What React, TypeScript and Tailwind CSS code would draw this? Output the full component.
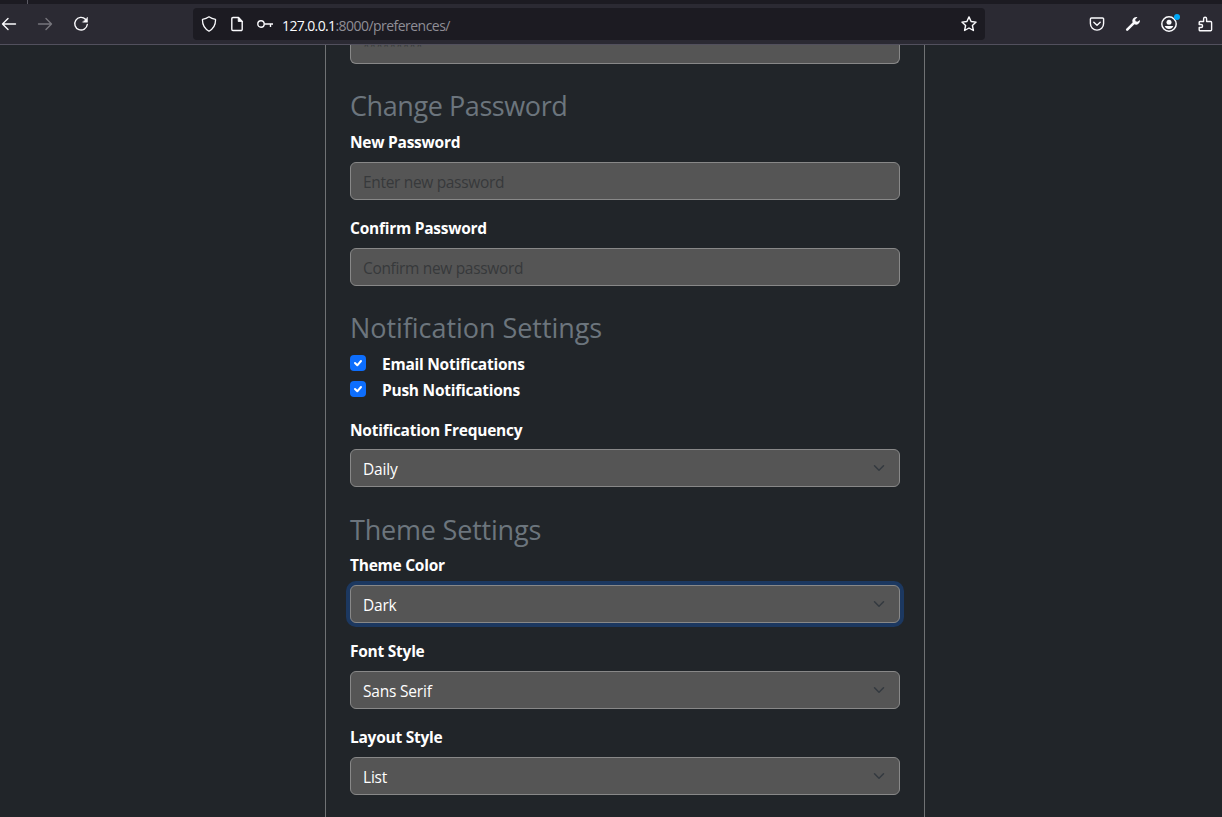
import type { ReactNode } from "react";

const FONT = "font-['Open_Sans','Noto_Sans',sans-serif]";

function Heading({ children, className }: { children: ReactNode; className: string }) {
  return (
    <h3 className={`flex h-[34px] items-center whitespace-nowrap text-[27px] leading-[34px] font-normal text-[#6c757d] ${className}`}>
      <span>{children}</span>
    </h3>
  );
}

function Label({ children, className = "" }: { children: ReactNode; className?: string }) {
  return (
    <label className={`block h-6 whitespace-nowrap text-[15.5px] leading-6 font-bold tracking-[-0.25px] text-white ${className}`}>
      <span>{children}</span>
    </label>
  );
}

const BOX = "flex h-[38px] w-full shrink-0 items-center rounded-md border border-[#888] bg-[#555] px-3 text-[15.5px] leading-6 whitespace-nowrap";

function Input({ placeholder, className = "" }: { placeholder: string; className?: string }) {
  return (
    <div className={`${BOX} tracking-[-0.33px] text-[#37393b] ${className}`}>
      <span className="pt-px">{placeholder}</span>
    </div>
  );
}

function Select({ value, focused = false, className = "" }: { value: string; focused?: boolean; className?: string }) {
  return (
    <div className={`${BOX} justify-between tracking-[-0.2px] text-white ${focused ? "ring-4 ring-[#1c3860]" : ""} ${className}`}>
      <span className="pt-px">{value}</span>
      <svg width="16" height="12" viewBox="0 0 16 16" fill="none">
        <path d="m2 5 6 6 6-6" stroke="#343a40" strokeWidth="2" strokeLinecap="round" strokeLinejoin="round" />
      </svg>
    </div>
  );
}

function Check({ label }: { label: string }) {
  return (
    <div className="flex h-[26px] items-start">
      <svg width="16" height="16" viewBox="0 0 16 16" className="mr-4 shrink-0">
        <rect width="16" height="16" rx="4" fill="#0d6efd" />
        <path d="m5 8 2.3 2.3L11 6" fill="none" stroke="#fff" strokeWidth="2" strokeLinecap="round" strokeLinejoin="round" />
      </svg>
      <Label className="-mt-[3px]">{label}</Label>
    </div>
  );
}

const ICON = { width: 16, height: 16, viewBox: "0 0 16 16", fill: "none", stroke: "#fbfbfe", strokeWidth: 1.4, strokeLinecap: "round", strokeLinejoin: "round" } as const;

function Toolbar() {
  return (
    <header className="shrink-0 bg-[#2b2a33]">
      <div className="flex h-1 bg-[#1c1b22]">
        <div className="ml-[27px] w-px bg-[#5b5a64]" />
      </div>
      <div className="flex h-[41px] items-center border-b border-[#52505d]">
        <svg {...ICON} className="ml-[1px]"><path d="M14.5 8H1.5M7 2.5 1.5 8 7 13.5" /></svg>
        <svg {...ICON} stroke="#77767d" className="ml-5"><path d="M1.5 8h13M9 2.5 14.5 8 9 13.5" /></svg>
        <svg {...ICON} className="ml-5"><path d="M14.3 8.5A6.3 6.3 0 1 1 12.5 3.2" /><path d="M14.5 1.5v4.7H9.8z" fill="#fbfbfe" strokeWidth=".5" /></svg>
        <div className="ml-[104px] flex h-8 w-[792px] items-center rounded bg-[#1c1b22] px-2">
          <svg {...ICON} strokeWidth={1.3}><path d="M8 .8C6.400 2 4 3 1.500 3.300c-.3 5.200 2 9.300 6.500 11.900 4.500-2.600 6.800-6.700 6.500-11.900C12 3 9.600 2 8 .8Z" /></svg>
          <svg {...ICON} className="ml-3"><path d="M9.500 1.500H4a1.200 1.200 0 0 0-1.200 1.200v10.600A1.200 1.200 0 0 0 4 14.500h8a1.200 1.200 0 0 0 1.200-1.200V5.500z" /><path d="M9.200 1.500v4h4z" fill="#fbfbfe" strokeWidth=".8" /></svg>
          <svg {...ICON} className="ml-3" strokeLinecap="butt"><circle cx="4" cy="8" r="3.200" /><path d="M7.200 8H16M13.500 8v3" /></svg>
          <span className="ml-[9px] whitespace-nowrap pt-[2px] text-[14px] tracking-[-0.54px] text-[#8f8e96]"><span className="tracking-[-0.62px] text-[#fbfbfe]">127.0.0.1</span>:8000/preferences/</span>
          <svg {...ICON} className="ml-auto"><path d="m8 .9 2.100 4.600 5 .6-3.700 3.400 1 5L8 12l-4.400 2.500 1-5L.9 6.100l5-.6z" /></svg>
        </div>
        <svg {...ICON} className="ml-[104px]"><path d="M2.500 2h11A1.100 1.100 0 0 1 14.600 3.100V7.500a6.600 6.600 0 0 1-13.200 0V3.100A1.100 1.100 0 0 1 2.500 2Z" /><path d="M4.800 6.300 8 9.300l3.200-3" /></svg>
        <svg {...ICON} className="ml-5" stroke="none" fill="#fbfbfe"><path d="M11.200 1a4 4 0 0 0-3.600 5.500L1.300 12.800a1.200 1.200 0 0 0 1.800 1.800l6.300-6.300A4 4 0 0 0 15 4.100l-2.600 1.700-1.800-.5-.4-1.800L12.500 1.200A4 4 0 0 0 11.200 1Z" /></svg>
        <svg width="20" height="20" viewBox="0 0 20 20" className="ml-[18px] overflow-visible" fill="none"><circle cx="10" cy="10" r="7.200" stroke="#fbfbfe" strokeWidth="1.500" /><circle cx="10" cy="8.200" r="2.500" fill="#fbfbfe" /><path d="M5.700 12h8.600c-.7 1.900-2.300 3-4.300 3s-3.600-1.100-4.300-3Z" fill="#fbfbfe" /><circle cx="18" cy="3" r="3" fill="#00a8f8" /></svg>
        <svg {...ICON} className="ml-[18px]"><path d="M2.200 8V6.500a1 1 0 0 1 1-1h3.400V2.700a1.500 1.500 0 0 1 3 0v2.800h4a1 1 0 0 1 1 1v7.200a1 1 0 0 1-1 1H3.200a1 1 0 0 1-1-1V11.500h1.900a1.500 1.500 0 0 0 0-3H2.200z" /></svg>
      </div>
    </header>
  );
}

export default function App() {
  return (
    <div className={`flex h-[817px] w-[1222px] flex-col overflow-hidden bg-[#212529] ${FONT}`}>
      <Toolbar />
      <main className="ml-[325px] flex w-[600px] flex-1 flex-col overflow-hidden border-x border-[#707274] px-6">
        <div className="flex h-[19px] shrink-0 items-start overflow-hidden rounded-b-md border-x border-b border-[#888] bg-[#555] px-3">
          <span className="-mt-[5px] text-[12px] leading-[14px] text-[#37393b]">*********</span>
        </div>
        <Heading className="mt-[25px] tracking-[-0.42px]">Change Password</Heading>
        <Label className="mt-[7px]">New Password</Label>
        <Input placeholder="Enter new password" className="mt-2" />
        <Label className="mt-4">Confirm Password</Label>
        <Input placeholder="Confirm new password" className="mt-2" />
        <Heading className="mt-[25px] tracking-[-0.05px]">Notification Settings</Heading>
        <div className="mt-[10px]">
          <Check label="Email Notifications" />
          <Check label="Push Notifications" />
        </div>
        <Label className="mt-[11px]">Notification Frequency</Label>
        <Select value="Daily" className="mt-[7px]" />
        <Heading className="mt-[26px] tracking-[-0.2px]">Theme Settings</Heading>
        <Label className="mt-[6px]">Theme Color</Label>
        <Select value="Dark" focused className="mt-2" />
        <Label className="mt-4">Font Style</Label>
        <Select value="Sans Serif" className="mt-2" />
        <Label className="mt-4">Layout Style</Label>
        <Select value="List" className="mt-2" />
      </main>
    </div>
  );
}
